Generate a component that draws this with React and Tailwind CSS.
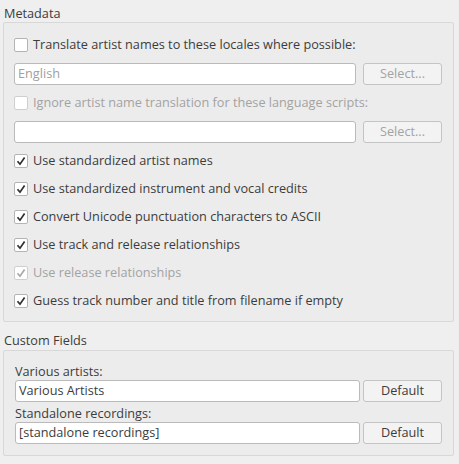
import React from 'react'

const font = { fontFamily: '"Open Sans", "Noto Sans", sans-serif' }

function Check({ checked, disabled }) {
  return (
    <span
      className={
        'flex h-[14px] w-[14px] shrink-0 items-center justify-center rounded-[2px] border bg-white ' +
        (disabled ? 'border-[#cfcfcf]' : 'border-[#b4b4b4]')
      }
    >
      {checked && (
        <svg width="10" height="10" viewBox="0 0 10 10">
          <path
            d="M1.5 5.2 L4 8.2 L8.6 1.6"
            fill="none"
            stroke={disabled ? '#a8a8a8' : '#2e2e2e'}
            strokeWidth="1.7"
          />
        </svg>
      )}
    </span>
  )
}

function CheckRow({ label, checked, disabled }) {
  return (
    <div className="flex h-[22px] items-center gap-[5px]">
      <Check checked={checked} disabled={disabled} />
      <span className={disabled ? 'text-[#a3a3a3]' : 'text-[#3c3c3c]'}>{label}</span>
    </div>
  )
}

// line edit + push button pair
function Field({ value, placeholder, button, disabled, gap }) {
  return (
    <div className={'flex h-[22px] items-stretch ' + gap}>
      <div
        className={
          'flex flex-1 items-center rounded-[3px] border border-[#bababa] bg-white px-[3px] ' +
          (placeholder ? 'text-[#a0a0a0]' : 'text-[#3c3c3c]')
        }
      >
        {value || placeholder}
      </div>
      <button
        className={
          'flex w-[79px] items-center justify-center rounded-[3px] border border-[#c4c4c4] bg-[#f3f3f3] ' +
          (disabled ? 'text-[#a3a3a3]' : 'text-[#3c3c3c]')
        }
      >
        {button}
      </button>
    </div>
  )
}

export default function App() {
  return (
    <div className="h-[464px] w-[459px] bg-[#efefef] text-[12.7px]" style={font}>
      <div className="pl-[4px] pt-[4px] leading-[18px] text-[#3c3c3c]">Metadata</div>
      <div className="ml-[3px] mr-[5px] rounded-[2px] border border-[#d8d8d8] bg-[#ececec] pb-[9px] pl-[10px] pr-[11px] pt-[11px]">
        <div className="flex flex-col gap-[7px]">
          <CheckRow label="Translate artist names to these locales where possible:" />
          <Field placeholder="English" button="Select..." disabled gap="gap-[7px]" />
          <CheckRow label="Ignore artist name translation for these language scripts:" disabled />
          <Field value="" button="Select..." disabled gap="gap-[7px]" />
        </div>
        <div className="mt-[7px] flex flex-col gap-[6px]">
          <CheckRow label="Use standardized artist names" checked />
          <CheckRow label="Use standardized instrument and vocal credits" checked />
          <CheckRow label="Convert Unicode punctuation characters to ASCII" checked />
          <CheckRow label="Use track and release relationships" checked />
          <CheckRow label="Use release relationships" checked disabled />
          <CheckRow label="Guess track number and title from filename if empty" checked />
        </div>
      </div>
      <div className="pl-[4px] pt-[9px] leading-[18px] text-[#3c3c3c]">Custom Fields</div>
      <div className="ml-[3px] mr-[5px] mt-[1px] rounded-[2px] border border-[#d8d8d8] bg-[#ececec] pb-[11px] pl-[11px] pr-[11px] pt-[11px]">
        <div className="leading-[18px] text-[#3c3c3c]">Various artists:</div>
        <Field value="Various Artists" button="Default" gap="gap-[3px]" />
        <div className="mt-[2px] leading-[18px] text-[#3c3c3c]">Standalone recordings:</div>
        <Field value="[standalone recordings]" button="Default" gap="gap-[3px]" />
      </div>
    </div>
  )
}
